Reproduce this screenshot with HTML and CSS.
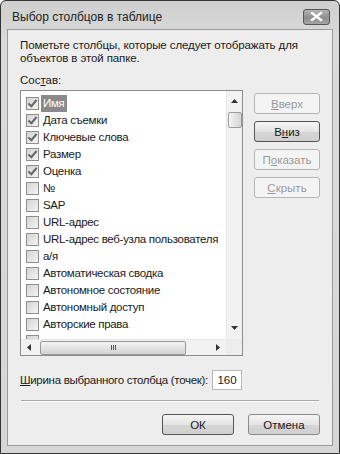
FILE: index.html
```html
<!DOCTYPE html>
<html lang="ru">
<head>
    <meta charset="UTF-8">
    <title>Выбор столбцов в таблице</title>
    <link rel="stylesheet" href="styles.css">
</head>
<body>
    <div class="window">
        <div class="titlebar">
            <span class="title">Выбор столбцов в таблице</span>
            <span class="close">
                <svg width="13" height="9" viewBox="0 0 13 9"><path d="M2 1 L11 8 M11 1 L2 8" stroke="#fff" stroke-width="2.4" stroke-linecap="square"/></svg>
            </span>
        </div>

        <div class="client">
            <p class="hint">Пометьте столбцы, которые следует отображать для объектов в этой папке.</p>
            <div class="label">Сос<u>т</u>ав:</div>

            <div class="columns">
                <div class="listbox">
                    <ul class="items">
                        <li><span class="check on"></span><span class="name selected">Имя</span></li>
                        <li><span class="check on"></span><span class="name">Дата съемки</span></li>
                        <li><span class="check on"></span><span class="name">Ключевые слова</span></li>
                        <li><span class="check on"></span><span class="name">Размер</span></li>
                        <li><span class="check on"></span><span class="name">Оценка</span></li>
                        <li><span class="check"></span><span class="name">№</span></li>
                        <li><span class="check"></span><span class="name">SAP</span></li>
                        <li><span class="check"></span><span class="name">URL-адрес</span></li>
                        <li><span class="check"></span><span class="name">URL-адрес веб-узла пользователя</span></li>
                        <li><span class="check"></span><span class="name">а/я</span></li>
                        <li><span class="check"></span><span class="name">Автоматическая сводка</span></li>
                        <li><span class="check"></span><span class="name">Автономное состояние</span></li>
                        <li><span class="check"></span><span class="name">Автономный доступ</span></li>
                        <li><span class="check"></span><span class="name">Авторские права</span></li>
                        <li><span class="check"></span><span class="name"></span></li>
                    </ul>
                    <div class="vscroll">
                        <span class="arrow">
                            <svg width="7" height="4" viewBox="0 0 7 4"><path d="M0 4 L3.5 0 L7 4 Z" fill="#333"/></svg>
                        </span>
                        <span class="vthumb"></span>
                        <span class="arrow end">
                            <svg width="7" height="4" viewBox="0 0 7 4"><path d="M0 0 L3.5 4 L7 0 Z" fill="#333"/></svg>
                        </span>
                    </div>
                    <div class="hscroll">
                        <span class="arrow">
                            <svg width="4" height="7" viewBox="0 0 4 7"><path d="M4 0 L0 3.5 L4 7 Z" fill="#333"/></svg>
                        </span>
                        <span class="hthumb"><i></i><i></i><i></i></span>
                        <span class="arrow end">
                            <svg width="4" height="7" viewBox="0 0 4 7"><path d="M0 0 L4 3.5 L0 7 Z" fill="#333"/></svg>
                        </span>
                    </div>
                    <div class="corner"></div>
                </div>

                <div class="side">
                    <button class="btn" disabled><u>В</u>верх</button>
                    <button class="btn focus">В<u>н</u>из</button>
                    <button class="btn" disabled>П<u>о</u>казать</button>
                    <button class="btn" disabled><u>С</u>крыть</button>
                </div>
            </div>

            <div class="width-row">
                <span><u>Ш</u>ирина выбранного столбца (точек):</span>
                <span class="field">160</span>
            </div>

            <div class="separator"></div>

            <div class="actions">
                <button class="btn big default">ОК</button>
                <button class="btn big">Отмена</button>
            </div>
        </div>
    </div>
</body>
</html>
```

FILE: styles.css
```css
body {
    margin: 0;
    padding: 0;
    background: #fff;
    font-family: 'Liberation Sans', Arial, sans-serif;
    font-size: 11.5px;
    color: #1a1a1a;
}

.window {
    width: 340px;
    height: 454px;
    box-sizing: border-box;
    border: 1px solid #333;
    border-radius: 6px 6px 0 0;
    background: linear-gradient(to bottom, #cfcfcf, #dadada 40px, #d6d6d6);
    padding: 0 6px 7px 6px;
    display: flex;
    flex-direction: column;
}

.titlebar {
    height: 28px;
    display: flex;
    align-items: center;
    justify-content: space-between;
    padding: 0 3px 0 5px;
}

.title {
    font-size: 12px;
    color: #222;
    padding-top: 3px;
}

.close {
    width: 27px;
    height: 16px;
    box-sizing: border-box;
    border: 1px solid #555;
    border-radius: 3px;
    background: linear-gradient(to bottom, #b5b5b5, #8f8f8f 55%, #a4a4a4);
    display: flex;
    align-items: center;
    justify-content: center;
    margin-top: 3px;
}

.client {
    flex: 1;
    background: #ededed;
    border: 1px solid #9a9a9a;
    padding: 9px 12px 0 12px;
    display: flex;
    flex-direction: column;
}

.hint {
    margin: 0;
    line-height: 13px;
    letter-spacing: -0.1px;
}

.label {
    margin-top: 9px;
    line-height: 13px;
}

.columns {
    display: flex;
    gap: 11px;
    margin-top: 3px;
}

.listbox {
    width: 224px;
    height: 266px;
    box-sizing: border-box;
    border: 1px solid #8c8c8c;
    background: #fff;
    display: grid;
    grid-template-columns: 1fr 16px;
    grid-template-rows: 1fr 16px;
    overflow: hidden;
}

.items {
    list-style: none;
    margin: 0;
    padding: 4px 0 0 5px;
    overflow: hidden;
}

.items li {
    height: 17px;
    display: flex;
    align-items: center;
    white-space: nowrap;
}

.check {
    flex-shrink: 0;
    width: 13px;
    height: 13px;
    box-sizing: border-box;
    border: 1px solid #8e8e8e;
    background: linear-gradient(135deg, #d4d4d4, #f4f4f4);
    margin-right: 2px;
    position: relative;
}

.check.on::after {
    content: "";
    position: absolute;
    left: 3px;
    top: 0px;
    width: 3px;
    height: 7px;
    border: solid #666;
    border-width: 0 2px 2px 0;
    transform: rotate(40deg);
}

.name {
    flex-shrink: 0;
    padding: 0 2px;
    line-height: 17px;
    letter-spacing: -0.3px;
}

.name.selected {
    background: #8a8a8a;
    color: #fff;
}

.vscroll {
    background: #f2f2f2;
    border-left: 1px solid #e6e6e6;
    display: flex;
    flex-direction: column;
    align-items: center;
}

.vscroll .arrow {
    height: 20px;
    display: flex;
    align-items: center;
    justify-content: center;
}

.vscroll .end {
    margin-top: auto;
    height: 16px;
    margin-bottom: 3px;
}

.vthumb {
    width: 14px;
    height: 16px;
    box-sizing: border-box;
    border: 1px solid #9a9a9a;
    border-radius: 2px;
    background: linear-gradient(to right, #f4f4f4, #d4d4d4);
    margin-top: 1px;
}

.hscroll {
    background: #f2f2f2;
    border-top: 1px solid #e6e6e6;
    display: flex;
    align-items: center;
}

.hscroll .arrow {
    width: 16px;
    display: flex;
    justify-content: center;
}

.hscroll .end {
    margin-left: auto;
}

.hthumb {
    width: 146px;
    height: 14px;
    box-sizing: border-box;
    border: 1px solid #9a9a9a;
    border-radius: 2px;
    background: linear-gradient(to bottom, #f4f4f4, #d2d2d2);
    margin-left: 3px;
    display: flex;
    justify-content: center;
    align-items: center;
    gap: 1px;
}

.hthumb i {
    width: 1px;
    height: 5px;
    background: #555;
}

.corner {
    background: #ededed;
}

.side {
    display: flex;
    flex-direction: column;
    gap: 7px;
    padding-top: 3px;
}

.btn {
    width: 66px;
    height: 21px;
    box-sizing: border-box;
    border: 1px solid #8a8a8a;
    border-radius: 3px;
    background: linear-gradient(to bottom, #f6f6f6, #e4e4e4 50%, #d6d6d6 51%, #cfcfcf);
    font-family: inherit;
    font-size: 11.5px;
    color: #1a1a1a;
    padding: 0;
}

.btn:disabled {
    background: #f4f4f4;
    border-color: #b4b4b4;
    color: #9a9a9a;
}

.btn.focus {
    border-color: #555;
}

.width-row {
    display: flex;
    align-items: center;
    gap: 4px;
    margin-top: 14px;
    letter-spacing: -0.3px;
}

.field {
    width: 30px;
    height: 20px;
    box-sizing: border-box;
    border: 1px solid #b8b8b8;
    background: #fff;
    display: flex;
    align-items: center;
    justify-content: center;
    letter-spacing: 0;
}

.separator {
    height: 1px;
    background: #a8a8a8;
    border-bottom: 1px solid #fff;
    margin: 10px 1px 0 1px;
}

.actions {
    display: flex;
    justify-content: flex-end;
    gap: 14px;
    margin-top: 12px;
}

.btn.big {
    width: 72px;
    height: 21px;
}

.btn.default {
    border-color: #555;
}
```
